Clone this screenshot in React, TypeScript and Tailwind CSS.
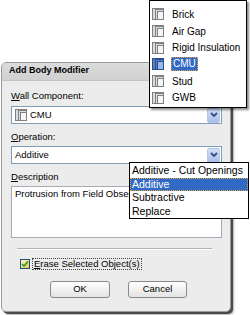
import React from "react";

function WallIcon({ selected = false }: { selected?: boolean }) {
  const stroke = selected ? "#2a4d8f" : "#808080";
  const fill1 = selected ? "#5b82c8" : "#dcdcdc";
  const fill2 = selected ? "#9ab8e8" : "#f6f6f6";
  return (
    <svg width="12" height="12" viewBox="0 0 12 12" className="shrink-0">
      <rect x="0.5" y="0.5" width="11" height="11" fill={fill1} stroke={stroke} />
      <rect x="3.5" y="1.5" width="8" height="10" fill={fill1} stroke={stroke} />
      <rect x="5.5" y="3.5" width="6" height="8" fill={fill2} stroke={stroke} />
    </svg>
  );
}

function DropBtn() {
  return (
    <div className="w-[13px] h-[15px] rounded-[2px] border border-[#b3c6ea] bg-gradient-to-b from-[#d3e0f9] to-[#a9c0ec] flex items-center justify-center">
      <svg width="8" height="6" viewBox="0 0 8 6">
        <polyline points="1,1 4,4 7,1" fill="none" stroke="#3b4f7a" strokeWidth="1.8" />
      </svg>
    </div>
  );
}

const wallItems = ["Brick", "Air Gap", "Rigid Insulation", "CMU", "Stud", "GWB"];
const opItems = ["Additive - Cut Openings", "Additive", "Subtractive", "Replace"];

export default function App() {
  return (
    <div className="relative w-[250px] h-[315px] bg-white overflow-hidden font-['Liberation_Sans',Arial,sans-serif] text-black">
      {/* Dialog window */}
      <div className="absolute left-[1px] top-[62px] w-[230px] h-[250px] rounded-[5px] border border-[#9a9a9a] bg-[#ececec] shadow-[2px_2px_0_#4a4a4a,3px_3px_2px_rgba(0,0,0,0.3)] flex flex-col overflow-hidden">
        <div className="h-[18px] bg-gradient-to-b from-[#dcdcdc] to-[#d0d0d0] border-b border-[#c4c4c4] flex items-center pl-[7px] pb-[2px]">
          <span className="text-[9px] font-bold leading-none">Add Body Modifier</span>
        </div>
        <div className="flex flex-col pl-[9px] pr-[8px] pt-[9px] text-[9.5px]">
          <div className="h-[12px] leading-[12px]">
            <span className="underline">W</span>all Component:
          </div>
          <div className="mt-[4px] h-[18px] bg-white border border-[#7f9db9] flex items-center pl-[3px] pr-[1px]">
            <WallIcon />
            <span className="ml-[3px] flex-1">CMU</span>
            <DropBtn />
          </div>
          <div className="mt-[7px] h-[12px] leading-[12px]">
            <span className="underline">O</span>peration:
          </div>
          <div className="mt-[3px] h-[18px] bg-white border border-[#7f9db9] flex items-center pl-[3px] pr-[1px]">
            <span className="flex-1">Additive</span>
            <DropBtn />
          </div>
          <div className="mt-[7px] h-[12px] leading-[12px]">
            <span className="underline">D</span>escription
          </div>
          <div className="mt-[3px] h-[52px] bg-white border border-[#a5acb5] pl-[3px] pt-[1px] leading-[12px]">
            <div className="w-[114px] overflow-hidden whitespace-nowrap">Protrusion from Field Observations</div>
          </div>
          <div className="mt-[10px] ml-[6px] mr-[10px] h-[2px] border-t border-[#b4b4b4] border-b border-b-white" />
          <div className="mt-[8px] h-[12px] flex items-center pl-[9px]">
            <div className="w-[10px] h-[10px] border border-[#1c5180] bg-gradient-to-br from-[#fff3c8] to-[#f5c04a] flex items-center justify-center">
              <svg width="8" height="8" viewBox="0 0 8 8">
                <polyline points="1,4 3,6 7,1.5" fill="none" stroke="#21a121" strokeWidth="1.7" />
              </svg>
            </div>
            <span className="ml-[2px] px-[1px] border border-dotted border-[#444] leading-[10px]">
              <span className="underline">E</span>rase Selected Object(s)
            </span>
          </div>
          <div className="mt-[11px] flex pl-[39px] gap-[18px]">
            <div className="w-[60px] h-[17px] rounded-[3px] border border-[#8a8a8a] bg-gradient-to-b from-white to-[#e4e4e4] flex items-center justify-center">
              OK
            </div>
            <div className="w-[59px] h-[17px] rounded-[3px] border border-[#8a8a8a] bg-gradient-to-b from-white to-[#e4e4e4] flex items-center justify-center">
              Cancel
            </div>
          </div>
        </div>
      </div>

      {/* Wall component dropdown list */}
      <div className="absolute left-[149px] top-0 w-[98px] h-[108px] bg-white border border-black shadow-[2px_2px_2px_rgba(0,0,0,0.45)] pt-[5px] text-[10px]">
        {wallItems.map((it) => {
          const sel = it === "CMU";
          return (
            <div key={it} className="h-[16.7px] flex items-center pl-[2px]">
              <WallIcon selected={sel} />
              {sel ? (
                <span className="ml-[7px] px-[1px] bg-[#316ac5] text-white border border-dotted border-[#e8a33a] leading-[12px]">
                  {it}
                </span>
              ) : (
                <span className="ml-[8px]">{it}</span>
              )}
            </div>
          );
        })}
      </div>

      {/* Operation dropdown list */}
      <div className="absolute left-[129px] top-[162px] w-[120px] h-[57px] bg-white border border-black pt-[1px] text-[10.5px]">
        {opItems.map((it) => {
          const sel = it === "Additive";
          return (
            <div
              key={it}
              className={
                sel
                  ? "h-[13.7px] flex items-center pl-[1px] bg-[#316ac5] text-white border border-dotted border-[#e8a33a]"
                  : "h-[13.7px] flex items-center pl-[2px]"
              }
            >
              {it}
            </div>
          );
        })}
      </div>
    </div>
  );
}
